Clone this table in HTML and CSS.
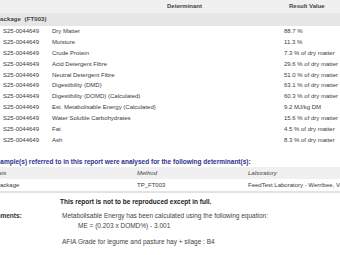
FILE: index.html
```html
<!DOCTYPE html>
<html>
<head>
<meta charset="utf-8">
<link rel="stylesheet" href="styles.css">
</head>
<body>
<div class="page">
  <div class="results">
    <div class="thead">
      <span class="th-det">Determinant</span>
      <span class="th-res">Result Value</span>
    </div>
    <div class="section">Package&nbsp; (FT003)</div>
    <div class="row"><span>S25-0044649</span><span>Dry Matter</span><span>88.7 %</span></div>
    <div class="row"><span>S25-0044649</span><span>Moisture</span><span>11.3 %</span></div>
    <div class="row"><span>S25-0044649</span><span>Crude Protein</span><span>7.3 % of dry matter</span></div>
    <div class="row"><span>S25-0044649</span><span>Acid Detergent Fibre</span><span>29.6 % of dry matter</span></div>
    <div class="row"><span>S25-0044649</span><span>Neutral Detergent Fibre</span><span>51.0 % of dry matter</span></div>
    <div class="row"><span>S25-0044649</span><span>Digestibility (DMD)</span><span>63.1 % of dry matter</span></div>
    <div class="row"><span>S25-0044649</span><span>Digestibility (DOMD) (Calculated)</span><span>60.3 % of dry matter</span></div>
    <div class="row"><span>S25-0044649</span><span>Est. Metabolisable Energy (Calculated)</span><span>9.2 MJ/kg DM</span></div>
    <div class="row"><span>S25-0044649</span><span>Water Soluble Carbohydrates</span><span>15.6 % of dry matter</span></div>
    <div class="row"><span>S25-0044649</span><span>Fat</span><span>4.5 % of dry matter</span></div>
    <div class="row"><span>S25-0044649</span><span>Ash</span><span>8.3 % of dry matter</span></div>
  </div>

  <p class="note">Sample(s) referred to in this report were analysed for the following determinant(s):</p>

  <div class="methods">
    <div class="mhead"><span class="basis">Analysis</span><span>Method</span><span>Laboratory</span></div>
    <div class="mrow"><span>Package</span><span>TP_FT003</span><span>FeedTest Laboratory - Werribee, Victoria</span></div>
  </div>

  <p class="warning">This report is not to be reproduced except in full.</p>

  <div class="comments">
    <span class="clabel">Comments:</span>
    <div class="ctext">
      <p>Metabolisable Energy has been calculated using the following equation:</p>
      <p class="eq">ME = (0.203 x DOMD%) - 3.001</p>
      <p class="grade">AFIA Grade for legume and pasture hay + silage : B4</p>
    </div>
  </div>
</div>
</body>
</html>
```
FILE: styles.css
```css
html, body {
  margin: 0;
  padding: 0;
  background: #ffffff;
  overflow: hidden;
}
body {
  font-family: "Liberation Sans", Arial, sans-serif;
  font-size: 6px;
  color: #3a3a3a;
  width: 340px;
  height: 255px;
}
p { margin: 0; }
.page {
  margin-left: -4px;
  width: 380px;
}
.thead {
  height: 12.5px;
  display: flex;
  align-items: center;
  background: #f0f0f0;
  font-weight: bold;
  color: #444;
}
.th-det { padding-left: 171px; width: 122px; }
.section {
  height: 13px;
  display: flex;
  align-items: center;
  background: #e6e6e6;
  font-weight: bold;
  color: #444;
  letter-spacing: 0.1px;
}
.row {
  display: grid;
  grid-template-columns: 56px 232px 1fr;
  height: 10.9px;
  align-items: center;
  white-space: nowrap;
}
.row span:first-child { padding-left: 7px; }
.results { padding-bottom: 10px; }
.note {
  color: #30308f;
  font-weight: bold;
  font-size: 6.5px;
  height: 12px;
  line-height: 12px;
  padding-top: 1px;
  box-sizing: border-box;
  white-space: nowrap;
}
.methods { border-bottom: 2px solid #e2e2e2; }
.mhead, .mrow {
  display: grid;
  grid-template-columns: 141px 111px 1fr;
  align-items: center;
  white-space: nowrap;
}
.mhead {
  height: 11.5px;
  background: #f0f0f0;
  font-style: italic;
  color: #444;
}
.basis { text-indent: -12px; overflow: hidden; }
.mrow { height: 12px; }
.warning {
  font-weight: bold;
  font-size: 6.5px;
  color: #222;
  padding-left: 64px;
  height: 16px;
  margin-top: 1px;
  display: flex;
  align-items: center;
}
.comments {
  display: flex;
  margin-top: 1px;
  margin-left: -10px;
  font-size: 6.5px;
}
.clabel {
  font-weight: bold;
  color: #333;
  width: 76px;
  line-height: 10px;
}
.ctext { color: #444; }
.ctext p { line-height: 10px; white-space: nowrap; }
.ctext .eq { padding-left: 16px; }
.ctext .grade { margin-top: 6px; }
```
